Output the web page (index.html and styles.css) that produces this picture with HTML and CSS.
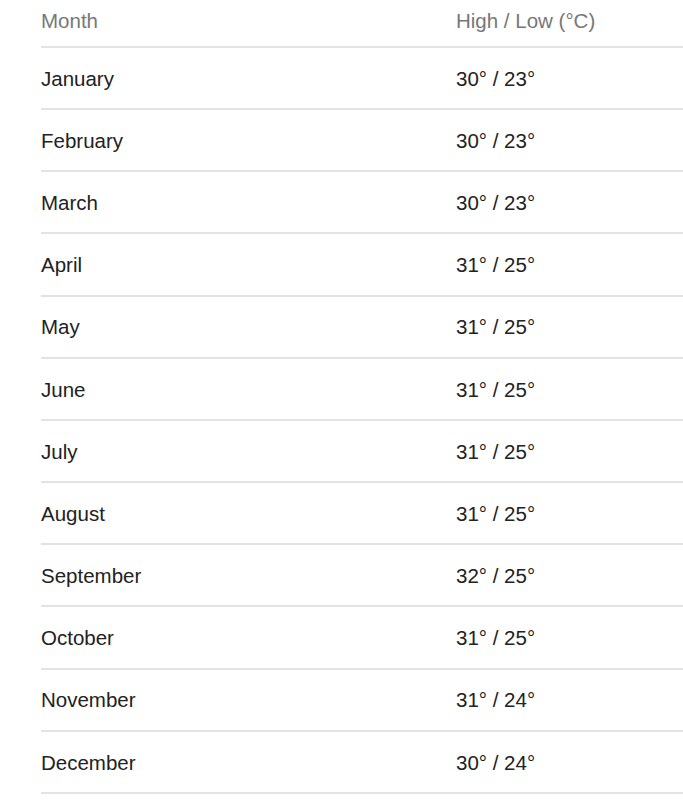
FILE: index.html
```html
<!DOCTYPE html>
<html lang="en">
<head>
<meta charset="utf-8">
<title>Monthly temperatures</title>
<link rel="stylesheet" href="styles.css">
</head>
<body>
<div class="wrap">
<table class="temps">
<thead>
<tr><th class="col-month">Month</th><th>High / Low (°C)</th></tr>
</thead>
<tbody>
<tr><td>January</td><td>30° / 23°</td></tr>
<tr><td>February</td><td>30° / 23°</td></tr>
<tr><td>March</td><td>30° / 23°</td></tr>
<tr><td>April</td><td>31° / 25°</td></tr>
<tr><td>May</td><td>31° / 25°</td></tr>
<tr><td>June</td><td>31° / 25°</td></tr>
<tr><td>July</td><td>31° / 25°</td></tr>
<tr><td>August</td><td>31° / 25°</td></tr>
<tr><td>September</td><td>32° / 25°</td></tr>
<tr><td>October</td><td>31° / 25°</td></tr>
<tr><td>November</td><td>31° / 24°</td></tr>
<tr><td>December</td><td>30° / 24°</td></tr>
</tbody>
</table>
</div>
</body>
</html>
```
FILE: styles.css
```css
html, body {
  margin: 0;
  padding: 0;
  background: #fff;
}
.wrap {
  padding-left: 41px;
}
.temps {
  width: 642px;
  border-collapse: collapse;
  font-family: "Liberation Sans", Arial, sans-serif;
  font-size: 20.5px;
  color: #222;
  table-layout: fixed;
}
.temps th {
  text-align: left;
  font-weight: normal;
  color: #777;
  vertical-align: top;
  height: 47px;
  box-sizing: border-box;
  padding: 9px 0 0 0;
  line-height: 23.6px;
  border-bottom: 2px solid #e3e3e3;
}
.temps th.col-month {
  width: 415px;
}
.temps td {
  height: 62.17px;
  box-sizing: border-box;
  padding: 1px 0 0 0;
  line-height: 23.6px;
  vertical-align: middle;
  border-bottom: 2px solid #e3e3e3;
}
```
